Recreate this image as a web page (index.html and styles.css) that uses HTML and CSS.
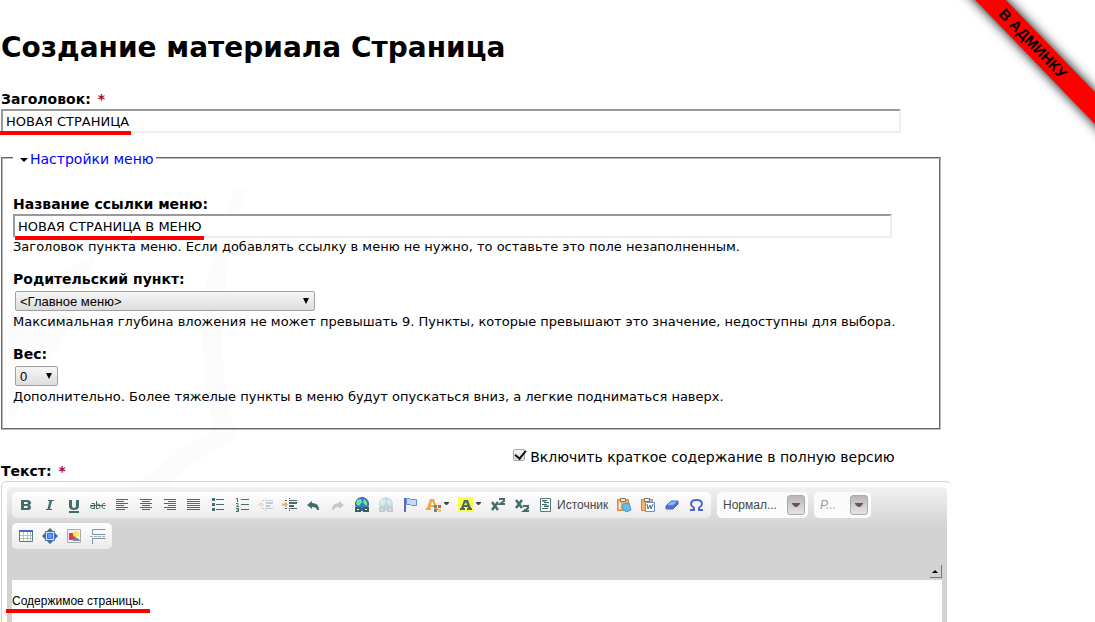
FILE: index.html
```html
<!DOCTYPE html>
<html lang="ru">
<head>
<meta charset="utf-8">
<title>Создание материала Страница</title>
<link rel="stylesheet" href="styles.css">
</head>
<body>
<svg class="watermark" viewBox="0 0 250 300" aria-hidden="true"><path d="M0 240V145Q40 90 95 65 70 160 0 240zM234 0 215 60Q190 130 213 240L238 248Q215 180 225 100 230 50 246 0zM213 240Q170 262 130 300H165Q190 270 238 248z"/></svg>
<div class="corner"><a class="ribbon" href="#">В АДМИНКУ</a></div>
<main class="page">
<h1 class="title">Создание материала Страница</h1>
<form>
<div class="item">
<label class="label" for="title">Заголовок: <span class="required">*</span></label>
<div class="marked"><input class="text" id="title" type="text" value="НОВАЯ СТРАНИЦА"><span class="mark mark-title"></span></div>
</div>
<fieldset class="menu">
<legend class="legend"><a class="toggle" href="#">Настройки меню</a></legend>
<div class="item">
<label class="label" for="link">Название ссылки меню:</label>
<div class="marked"><input class="text text-inner" id="link" type="text" value="НОВАЯ СТРАНИЦА В МЕНЮ"><span class="mark mark-link"></span></div>
<div class="description">Заголовок пункта меню. Если добавлять ссылку в меню не нужно, то оставьте это поле незаполненным.</div>
</div>
<div class="item">
<label class="label" for="parent">Родительский пункт:</label>
<span class="picker picker-wide"><select class="select" id="parent"><option>&lt;Главное меню&gt;</option></select></span>
<div class="description">Максимальная глубина вложения не может превышать 9. Пункты, которые превышают это значение, недоступны для выбора.</div>
</div>
<div class="item">
<label class="label" for="weight">Вес:</label>
<span class="picker"><select class="select" id="weight"><option>0</option></select></span>
<div class="description">Дополнительно. Более тяжелые пункты в меню будут опускаться вниз, а легкие подниматься наверх.</div>
</div>
</fieldset>
<div class="body-head">
<label class="label body-label" for="content">Текст: <span class="required">*</span></label>
<label class="teaser"><input class="check" type="checkbox" checked>Включить краткое содержание в полную версию</label>
</div>
<div class="editor">
<div class="chrome">
<div class="toolbar">
<div class="group">
<button class="tool" type="button" aria-label="Полужирный"><svg viewBox="0 0 16 16"><path fill-rule="evenodd" d="M3 3h6q4 0 4 3 0 1.500-1.500 2Q13 9 13 10.500 13 13 9 13H3zm3 2v2h2.500q1.500 0 1.500-1T8.500 5zm0 4v2h2.500q1.500 0 1.500-1T8.500 9z"/></svg></button>
<button class="tool" type="button" aria-label="Курсив"><svg viewBox="0 0 16 16"><path d="M6 3h6v1h-2L8 12h2v1H4v-1h1.500l2-8H6z"/></svg></button>
<button class="tool" type="button" aria-label="Подчеркнутый"><svg viewBox="0 0 16 16"><path d="M3 3h3v6q0 2 2 2t2-2V3h3v6q0 4-5 4T3 9zM3 14h10v2H3z"/></svg></button>
<button class="tool" type="button" aria-label="Зачеркнутый"><svg viewBox="0 0 16 16"><path class="line" d="M1.500 6.500h3v5h-2q-2 0-2-1.500t3.500-1M6.500 4v7.500h2q1.500 0 1.500-2.500t-3.500-2M15 6.500h-1.500q-1.500 0-1.500 2.500t1.500 2.500H15M0 8.500h16"/></svg></button>
<button class="tool" type="button" aria-label="По левому краю"><svg viewBox="0 0 16 16"><path class="line" d="M2 2.500h12M2 4.500h8M2 6.500h12M2 8.500h8M2 10.500h12M2 12.500h9"/></svg></button>
<button class="tool" type="button" aria-label="По центру"><svg viewBox="0 0 16 16"><path class="line" d="M2 2.500h12M4 4.500h8M2 6.500h12M4 8.500h8M2 10.500h12M4 12.500h8"/></svg></button>
<button class="tool" type="button" aria-label="По правому краю"><svg viewBox="0 0 16 16"><path class="line" d="M2 2.500h12M6 4.500h8M2 6.500h12M6 8.500h8M2 10.500h12M5 12.500h9"/></svg></button>
<button class="tool" type="button" aria-label="По ширине"><svg viewBox="0 0 16 16"><path class="line" d="M1 2.500h13M1 4.500h13M1 6.500h13M1 8.500h13M1 10.500h13M1 12.500h13"/></svg></button>
<button class="tool" type="button" aria-label="Маркированный список"><svg viewBox="0 0 16 16"><path d="M2 1h3v3H2zM2 6h3v3H2zM2 11h3v3H2zM6 2h8v1H6zM6 7h8v1H6zM6 12h8v1H6z"/></svg></button>
<button class="tool" type="button" aria-label="Нумерованный список"><svg viewBox="0 0 16 16"><path class="line" d="M2 1.500h1.500V5M2 6.500h2v1L2.500 9.500H5M2 11.500h2.500v3H2M2.500 13H4M7 2.500h8M7 7.500h8M7 12.500h8"/></svg></button>
<button class="tool dim" type="button" aria-label="Уменьшить отступ"><svg viewBox="0 0 16 16"><path d="M7 3h8v1H7zM8 5h7v2H8zM8 8h4v2H8zM7 11h8v1H7zM4 3h2v1H4zM4 11h2v1H4zM7 1h1v1H7zM7 13h1v1H7z"/><path fill="#f6a040" d="m0 7.500 4-3v2h2v2H4v2z"/></svg></button>
<button class="tool" type="button" aria-label="Увеличить отступ"><svg viewBox="0 0 16 16"><path d="M7 3h8v1H7zM7 5h8v2H7zM7 8h5v2H7zM7 11h8v1H7zM3 3h2v1H3zM3 11h2v1H3zM7 1h1v1H7zM7 13h1v1H7z"/><path fill="#f6a84a" d="M6 7.500 3 4.500v2H0v2h3v2z"/></svg></button>
<button class="tool" type="button" aria-label="Отменить"><svg viewBox="0 0 16 16"><path d="m1 8 5-4v2q7 0 7 7h-2q0-3-5-3v2z"/></svg></button>
<button class="tool dim" type="button" aria-label="Повторить"><svg viewBox="0 0 16 16"><path d="m14 8-5-4v2q-7 0-7 7h2q0-3 5-3v2z"/></svg></button>
<button class="tool" type="button" aria-label="Ссылка"><svg viewBox="0 0 16 16"><circle cx="8" cy="7" r="6.500" fill="#357cd6" stroke="#3465b0"/><path fill="#6eea80" d="m3 3 4-1 1 3-3 4-3-2zM10 2l3 3v4l-3-2-1-2z"/><path fill="#fff" stroke="#3d5f60" stroke-width="2" d="M2 11h4v3H2zM10 11h4v3h-4zM5 12.500h6"/></svg></button>
<button class="tool dim" type="button" aria-label="Убрать ссылку"><svg viewBox="0 0 16 16"><circle cx="8" cy="7" r="6.500" fill="#5c86dc" stroke="#7590c0"/><path fill="#8ce8a0" d="m3 3 4-1 1 3-3 4-3-2zM10 2l3 3v4l-3-2-1-2z"/><path fill="#fff" stroke="#5b7474" stroke-width="2" d="M2 11h4v3H2zM10 11h4v3h-4z"/></svg></button>
<button class="tool" type="button" aria-label="Якорь"><svg viewBox="0 0 16 16"><path fill="#6363c8" d="M2 1h2v14H2z"/><path fill="#c8d8f0" stroke="#5d91e5" d="M4.500 1.500h3l1 1h6v6h-5l-1-1h-4z"/></svg></button>
<button class="tool color" type="button" aria-label="Цвет текста"><svg viewBox="0 0 24 16"><path fill="#f5a54b" fill-rule="evenodd" d="M4 2h4l3 9h1v2H8v-2h1l-.500-1H4.500L4 11h1v2H0v-2h1zm2 2.500L5 8h3z"/><path fill="#3fae49" d="M8 8h3v3H8z"/><path fill="#f04848" d="M12 8h3v3h-3z"/><path fill="#4783e8" d="M8 12h3v3H8z"/><path fill="#f5c842" d="M12 12h3v3h-3z"/><path fill="#444" d="M18 5h5v1l-2 2h-1l-2-2z"/></svg></button>
<button class="tool color" type="button" aria-label="Цвет фона"><svg viewBox="0 0 24 16"><path fill="#ffff47" d="M0 0h15v15H0z"/><path fill-rule="evenodd" d="M6 3h4l3 8h1v2H9v-2h1v-1H6v1h1v2H2v-2h1zm2 2L6 8h3z"/><path fill="#444" d="M18 5h5v1l-2 2h-1l-2-2z"/></svg></button>
<button class="tool" type="button" aria-label="Надстрочный индекс"><svg viewBox="0 0 16 16"><path stroke="#466b6c" stroke-width="2.500" d="m2 5 6 8M8 5l-6 8"/><path class="line bold" d="M10 3V2h4v2l-4 3h5"/></svg></button>
<button class="tool" type="button" aria-label="Подстрочный индекс"><svg viewBox="0 0 16 16"><path stroke="#466b6c" stroke-width="2.500" d="m2 3 6 8M8 3l-6 8"/><path class="line bold" d="M10 10V9h4v2l-4 3h5"/></svg></button>
<button class="tool source" type="button"><svg viewBox="0 0 16 16"><path fill="#f5fbf5" stroke="#587879" d="M2.500 1.500h10v13h-10z"/><path class="line" d="M4 3.500h5M6 5.500h5M4 7.500h5M6 9.500h5M4 11.500h6"/><path stroke="#76c66c" d="M4 4.500h4M6 8.500h5"/></svg><span>Источник</span></button>
<button class="tool" type="button" aria-label="Вставить текст"><svg viewBox="0 0 16 16"><path fill="#efb266" stroke="#c58a44" d="M1.500 2.500h11v11h-11z"/><path fill="#eee" stroke="#8b7558" d="M4.500 1.500h5v3h-5z"/><path fill="#fff3dd" d="m3 5 2 1-1 6H3z"/><path fill="#67bce5" stroke="#4799cc" d="m7 7 6-1 2 7-5 2-4-4z"/></svg></button>
<button class="tool" type="button" aria-label="Вставить из Word"><svg viewBox="0 0 16 16"><path fill="#efb266" stroke="#c58a44" d="M1.500 2.500h11v11h-11z"/><path fill="#eee" stroke="#8b7558" d="M4.500 1.500h5v3h-5z"/><path fill="#fff" stroke="#6491d5" d="M5.500 5.500h9v9h-9z"/><path class="line" d="m7 7 1 5 2-4 1 4 2-5"/></svg></button>
<button class="tool" type="button" aria-label="Убрать форматирование"><svg viewBox="0 0 16 16"><path fill="#86b7f6" stroke="#4a66c9" d="m2 9 5-5h7l-5 5z"/><path fill="#4d75d8" stroke="#4a66c9" d="M2 9h7l5-5v3l-5 5H2z"/></svg></button>
<button class="tool" type="button" aria-label="Специальный символ"><svg viewBox="0 0 16 16"><path fill="none" stroke="#4e63cc" stroke-width="2" d="M2 13h4v-2Q3 9 3 7q0-4 5.500-4T14 7q0 2-3 4v2h4"/></svg></button>
</div>
<div class="group combo"><button class="combo-button" type="button"><span>Нормал...</span><span class="combo-arrow"><svg viewBox="0 0 8 5"><path d="M0 0h8v1L5 4H3L0 1z"/></svg></span></button></div>
<div class="group combo combo-small"><button class="combo-button combo-empty" type="button"><span>Р...</span><span class="combo-arrow"><svg viewBox="0 0 8 5"><path d="M0 0h8v1L5 4H3L0 1z"/></svg></span></button></div>
<div class="group">
<button class="tool" type="button" aria-label="Таблица"><svg viewBox="0 0 16 16"><path fill="#fff" stroke="#607b7c" d="M1.500 2.500h13v11h-13z"/><path fill="#416bc0" d="M1 2h14v2H1z"/><path stroke="#b5c0c0" d="M2 7.500h12M2 10.500h12M5.500 4v9M9.500 4v9M12.500 4v9"/></svg></button>
<button class="tool" type="button" aria-label="Развернуть"><svg viewBox="0 0 16 16"><path d="m8 0 3 3H5zM8 16l-3-3h6zM0 8l3-3v6zM16 8l-3 3V5z"/><path fill="#c5ddff" stroke="#4275d4" d="M3.500 3.500h9v9h-9z"/><path fill="#6597ed" stroke="#3e72d4" d="M5.500 5.500h5v5h-5z"/></svg></button>
<button class="tool" type="button" aria-label="Изображение"><svg viewBox="0 0 16 16"><path fill="#eef3f7" stroke="#aaa" d="M1.500 1.500h13v13h-13z"/><path fill="#dc3d4d" d="M3 5h7v7H3z"/><path fill="#6989b8" d="M7 13q0-3 3-3t4 3z"/><circle cx="10" cy="6" r="3" fill="#ffe54f"/></svg></button>
<button class="tool" type="button" aria-label="Разрыв страницы"><svg viewBox="0 0 16 16"><path fill="none" stroke="#8b9292" d="M15.500 6.500h-13v-5h13M2.500 16v-5.500h13"/><path stroke="#92aecb" stroke-dasharray="3 1" d="M0 8.500h16"/></svg></button>
</div>
</div>
<button class="collapse" type="button" aria-label="Свернуть панель"></button>
<div class="marked"><textarea class="content" id="content">Содержимое страницы.</textarea><span class="mark mark-content"></span></div>
</div>
</div>
</form>
</main>
</body>
</html>
```
FILE: styles.css
```css
* { box-sizing: border-box; }
body { margin: 0; background: #fff; color: #000; font: 14px/17px "DejaVu Sans", Verdana, sans-serif; }
.watermark { position: absolute; z-index: -1; left: 0; top: 190px; width: 250px; height: 300px; fill: #fcfcfc; }
.page { width: 87%; padding: 0 4px 0 1px; }
.title { margin: 0; padding: 31px 0 26px; font-size: 28px; line-height: 34px; }
.label { display: block; font-weight: bold; }
.required { margin-left: 2px; color: #a03; }
.marked { position: relative; }
.text { display: block; width: 95%; height: 24px; margin-top: 1px; padding: 0 3px; border: 2px solid; border-color: #999 #eee #eee #999; background: #fff; font: 13px "DejaVu Sans", sans-serif; }
.text-inner { width: 96%; }
.description { font-size: 13px; }
.mark { position: absolute; height: 4px; background: #f00; }
.mark-title { left: -1px; bottom: -2px; width: 131px; }
.mark-link { left: 2px; bottom: -2px; width: 189px; }
.mark-content { left: -6px; top: 29px; width: 144px; }
.menu { max-width: 940px; margin: 15px 0 19px; padding: 0 10px 23px; border: 2px groove #bbb; }
.legend { padding: 3px 2px 0; }
.toggle { display: flex; align-items: center; gap: 2px; padding-left: 5px; color: #00f; text-decoration: none; }
.toggle::before { content: ""; border: 4px solid transparent; border-top-color: #000; border-bottom: 0; }
.menu .item { margin-bottom: 16px; }
.menu .item:first-of-type { margin-top: 28px; }
.menu .item:last-child { margin-bottom: 0; }
.picker { position: relative; display: block; width: 43px; margin: 3px 2px 2px; }
.picker-wide { width: 300px; }
.picker::after { content: ""; position: absolute; right: 6px; top: 7px; border: 3px solid transparent; border-top: 6px solid #000; border-bottom: 0; pointer-events: none; }
.select { display: block; width: 100%; height: 20px; padding: 0 4px; appearance: none; border: 1px solid #a0a0a0; border-radius: 2px; background: linear-gradient(#f6f6f6, #ddd); color: #000; font: 13px "Liberation Sans", sans-serif; }
.body-head { display: flex; justify-content: space-between; height: 31px; padding-right: 54px; }
.body-label { align-self: flex-end; }
.teaser { display: flex; align-items: flex-start; gap: 5px; }
.check { appearance: none; position: relative; width: 12px; height: 12px; margin: 0; border: 1px solid #aaa; border-radius: 2px; background: linear-gradient(#f4f4f4, #ddd); }
.check:checked::after { content: ""; position: absolute; left: 3px; top: -2px; width: 5px; height: 9px; border: solid #111; border-width: 0 2px 2px 0; transform: rotate(40deg); }
.editor { margin: 1px -2px 0 0; padding: 5px 4px 0 5px; border: 1px solid #d3d3d3; border-width: 1px 0 0 1px; border-radius: 5px 5px 0 0; }
.chrome { padding: 5px 5px 0; border-radius: 5px 5px 0 0; background: linear-gradient(#f1f1f1, #d3d3d3 40px); }
.toolbar { display: flex; flex-wrap: wrap; gap: 5px 6px; }
.group { display: flex; height: 26px; padding: 0 3px 0 2px; border-radius: 5px; background: linear-gradient(#fff, #ebebeb); }
.group:last-child { padding: 0 2px; }
.tool { display: flex; align-items: center; gap: 3px; width: 24px; height: 26px; padding: 0 4px; border: 0; background: none; color: #474747; font: 12px "Liberation Sans", sans-serif; }
.tool svg { flex: none; width: 16px; height: 16px; fill: #466b6c; }
.tool .line { fill: none; stroke: #466b6c; }
.tool .bold { stroke-width: 2; }
.dim { opacity: .3; }
.color { width: 32px; }
.color svg { width: 24px; }
.source { width: 78px; }
.combo { width: 91px; padding: 0; background: #fbfbfb; }
.combo-small { width: 57px; }
.combo-button { display: flex; flex: 1; align-items: center; justify-content: space-between; padding: 0 3px 0 6px; border: 0; background: none; color: #474747; font: 12px "Liberation Sans", sans-serif; }
.combo-empty { color: #999; font-style: italic; }
.combo-arrow { display: flex; align-items: center; justify-content: center; width: 18px; height: 20px; border: 1px solid #aaa; border-radius: 3px; background: linear-gradient(#bdb5b5, #e7e3e3); }
.combo-arrow svg { width: 8px; height: 5px; fill: #655; }
.collapse { display: block; width: 12px; height: 13px; margin: 16px 0 2px auto; padding: 0; border: solid #777; border-width: 0 1px 1px 0; background: none; }
.collapse::before { content: ""; display: block; width: 0; margin: auto; border: 3px solid transparent; border-bottom-color: #000; border-top: 0; }
.content { display: block; width: 100%; height: 42px; padding: 14px 0; border: 0; overflow: hidden; resize: none; background: #fff; font: 12px/14px "Liberation Sans", sans-serif; }
.corner { position: absolute; z-index: 2; top: 0; right: 0; width: 160px; height: 160px; overflow: hidden; }
.ribbon { position: absolute; top: 34px; right: -64px; width: 250px; height: 22px; padding-right: 4px; background: #f00; box-shadow: 0 0 12px #000; color: #000; font: bold 15px/22px "Liberation Sans", sans-serif; text-align: center; text-decoration: none; transform: rotate(46deg); }
```
